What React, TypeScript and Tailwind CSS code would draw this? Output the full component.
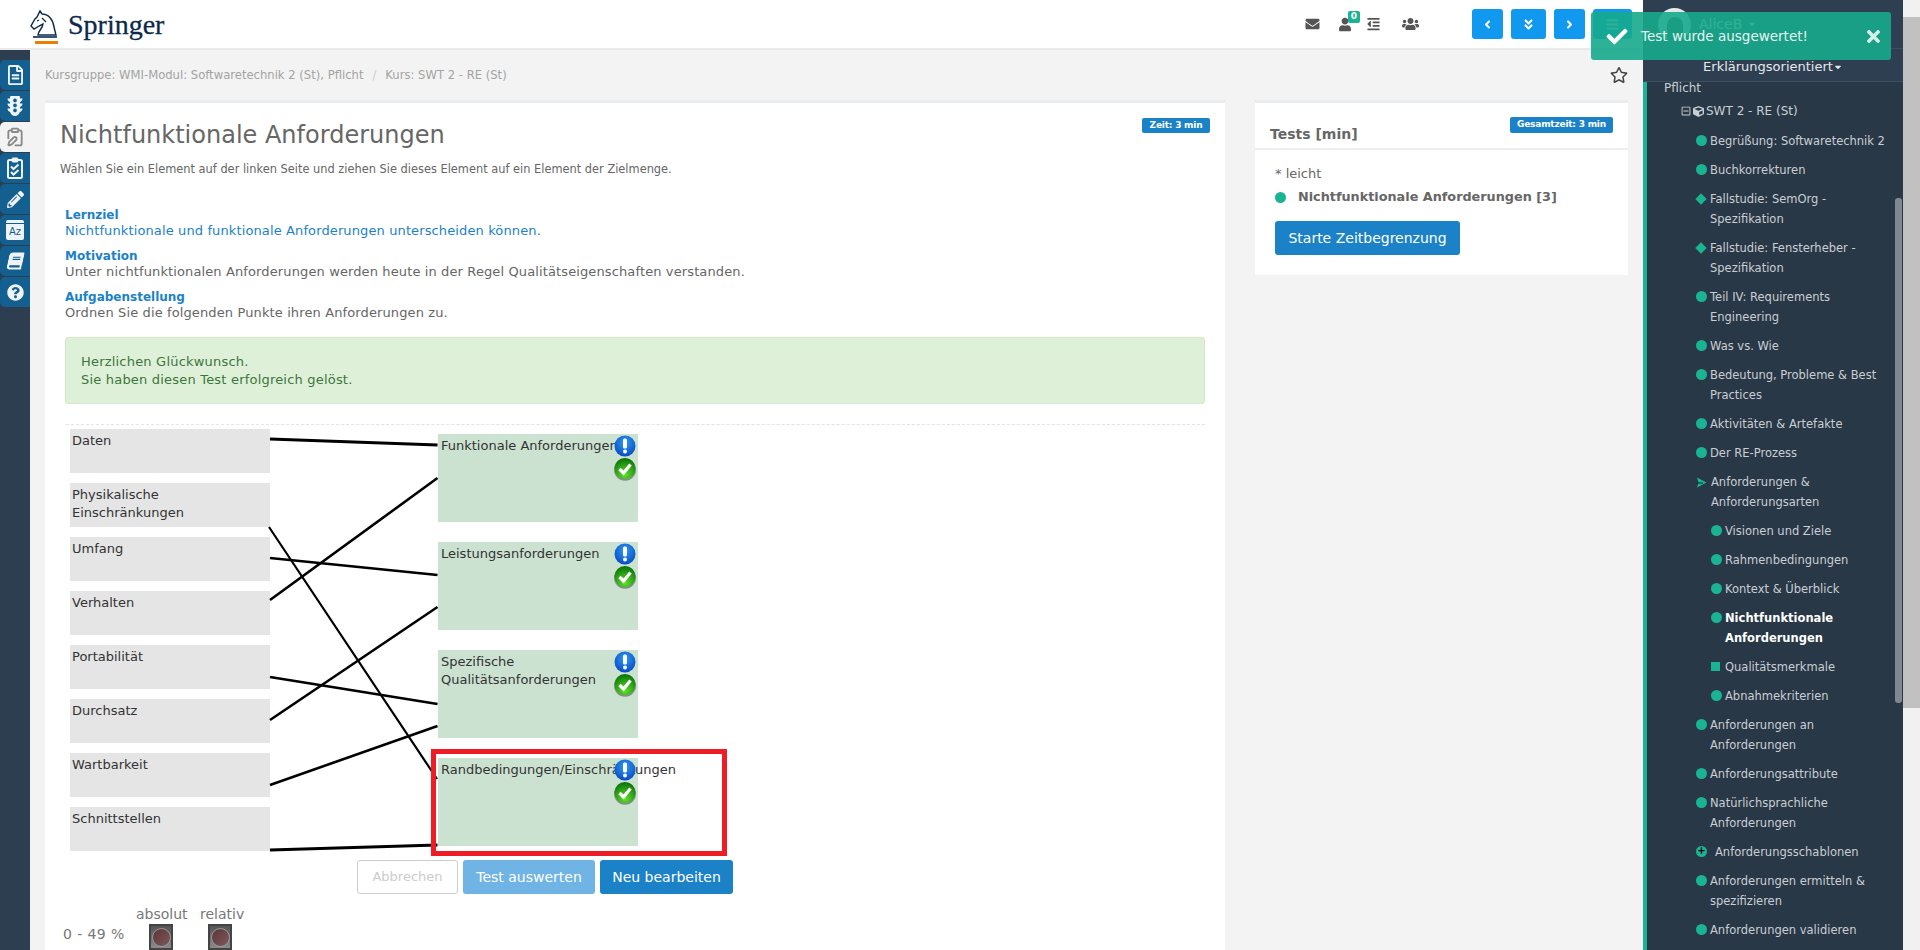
import { useId } from "react";
import {
  FaRegFileAlt,
  FaTrafficLight,
  FaPencilAlt,
  FaBook,
  FaQuestionCircle,
  FaEnvelope,
  FaUser,
  FaOutdent,
  FaUsers,
  FaAngleLeft,
  FaAngleRight,
  FaAngleDoubleDown,
  FaBars,
  FaCheck,
  FaTimes,
  FaRegStar,
  FaCube,
  FaRegMinusSquare,
  FaCaretDown,
} from "react-icons/fa";
import { ClipboardPen } from "lucide-react";

type Marker = "circle" | "diamond" | "arrow" | "square" | "plus";

const tree: { label: string; marker?: Marker; sub?: boolean; active?: boolean }[] = [
  { label: "Begrüßung: Softwaretechnik 2" },
  { label: "Buchkorrekturen" },
  { label: "Fallstudie: SemOrg - Spezifikation", marker: "diamond" },
  { label: "Fallstudie: Fensterheber - Spezifikation", marker: "diamond" },
  { label: "Teil IV: Requirements Engineering" },
  { label: "Was vs. Wie" },
  { label: "Bedeutung, Probleme & Best Practices" },
  { label: "Aktivitäten & Artefakte" },
  { label: "Der RE-Prozess" },
  { label: "Anforderungen & Anforderungsarten", marker: "arrow" },
  { label: "Visionen und Ziele", sub: true },
  { label: "Rahmenbedingungen", sub: true },
  { label: "Kontext & Überblick", sub: true },
  { label: "Nichtfunktionale Anforderungen", sub: true, active: true },
  { label: "Qualitätsmerkmale", sub: true, marker: "square" },
  { label: "Abnahmekriterien", sub: true },
  { label: "Anforderungen an Anforderungen" },
  { label: "Anforderungsattribute" },
  { label: "Natürlichsprachliche Anforderungen" },
  { label: "Anforderungsschablonen", marker: "plus" },
  { label: "Anforderungen ermitteln & spezifizieren" },
  { label: "Anforderungen validieren" },
];

const sources = [
  "Daten",
  "Physikalische Einschränkungen",
  "Umfang",
  "Verhalten",
  "Portabilität",
  "Durchsatz",
  "Wartbarkeit",
  "Schnittstellen",
];

const targets = [
  "Funktionale Anforderungen",
  "Leistungsanforderungen",
  "Spezifische Qualitätsanforderungen",
  "Randbedingungen/Einschränkungen",
];

// coordinates are relative to the drag area, which starts at 70,429
const wires = [
  [200, 10, 367.5, 16, 3],
  [199, 98, 367, 350, 2.2],
  [200, 129, 367.5, 146, 2.6],
  [200, 171, 367.5, 49, 2.6],
  [200, 248, 367.5, 275, 2.6],
  [200, 291, 367.5, 178, 2.6],
  [200, 356, 367.5, 297, 2.6],
  [200, 421, 367.5, 416, 3],
];

const TreeMarker = ({ kind = "circle" }: { kind?: Marker }) => {
  if (kind === "diamond") {
    return <span className="mt-[6px] ml-[1px] mr-[2px] h-[8px] w-[8px] rotate-45 bg-[#1ab394]" />;
  }
  if (kind === "square") {
    return <span className="mt-[5px] mr-[2px] h-[9px] w-[9px] bg-[#1ab394]" />;
  }
  if (kind === "arrow") {
    return (
      <svg width="11" height="11" viewBox="0 0 11 11" className="mt-[5px] mr-[1px]">
        <path d="M1 .5 10.5 5.5 1 10.5 2.5 5.5Z" fill="#1ab394" />
        <path d="M1 6h6" stroke="#0b2530" strokeWidth="1" />
      </svg>
    );
  }
  if (kind === "plus") {
    return (
      <span className="mt-[4px] mr-[5px] flex h-[11px] w-[11px] items-center justify-center rounded-full bg-[#1ab394] text-[10px] leading-none font-bold text-black">
        +
      </span>
    );
  }
  return <span className="mt-[4px] h-[11px] w-[11px] rounded-full bg-[#1ab394]" />;
};

const InfoBadge = () => {
  const id = useId();
  return (
    <svg width="22" height="22" viewBox="0 0 22 22" className="absolute top-[1px] left-0">
      <defs>
        <radialGradient id={id} cx="50%" cy="35%" r="70%">
          <stop offset="0%" stopColor="#2f9bf5" />
          <stop offset="100%" stopColor="#0645c0" />
        </radialGradient>
      </defs>
      <circle cx="11" cy="11" r="10.5" fill={`url(#${id})`} />
      <rect x="9" y="3.5" width="4" height="10" rx="1.5" fill="#fff" />
      <circle cx="11" cy="16.6" r="2" fill="#fff" />
    </svg>
  );
};

const CheckBadge = () => {
  const id = useId();
  return (
    <svg width="24" height="24" viewBox="0 0 24 24" className="absolute top-[23px] left-[-1px]">
      <defs>
        <radialGradient id={id} cx="50%" cy="80%" r="80%">
          <stop offset="0%" stopColor="#5fe02a" />
          <stop offset="100%" stopColor="#067006" />
        </radialGradient>
      </defs>
      <circle cx="12" cy="12.8" r="11" fill="#4d5a4d" opacity="0.6" />
      <circle cx="12" cy="11.5" r="10.5" fill={`url(#${id})`} />
      <path d="M6.5 12 10.5 16 17.5 7.5" fill="none" stroke="#fff" strokeWidth="3.2" />
    </svg>
  );
};

const TrafficLight = () => (
  <div className="flex h-[26px] w-[24px] items-center justify-center border-2 border-[#444] bg-gradient-to-b from-[#555] to-[#8a8a8a]">
    <span className="h-[19px] w-[19px] rounded-full border border-[#999] bg-gradient-to-br from-[#5c3438] to-[#7d5a5c]" />
  </div>
);

const SideTab = ({ children, active }: { children: React.ReactNode; active?: boolean }) => (
  <div
    className={`flex h-[30px] w-[30px] items-center justify-center rounded-l-[5px] ${
      active ? "bg-[#f3f3f3] text-[#8a8a8a]" : "bg-[#135f90] text-[#eef3f7]"
    }`}
  >
    {children}
  </div>
);

export default function App() {
  return (
    <div className="relative flex h-[950px] overflow-hidden bg-[#f3f3f3] font-['DejaVu_Sans',sans-serif] text-[13px] text-[#666]">
      {/* Main column */}
      <div className="flex min-w-0 flex-1 flex-col">
        <header className="flex h-[50px] shrink-0 items-center border-b-2 border-[#e9e9e9] bg-white">
          <div className="relative ml-[30px] h-[42px] w-[28px]">
            <svg width="28" height="30" viewBox="0 0 28 30" className="absolute top-[6px] left-0">
              <path
                d="M10 2 12 5C18 5 23 10 24 18L26 26H8C8 22 13 19 13 15L9 17 4 20 1 17 5 10 7 8Z"
                fill="none"
                stroke="#0b2a4a"
                strokeWidth="1.4"
              />
              <path d="M3 28H27" stroke="#0b2a4a" strokeWidth="1.6" />
              <path d="M12 9 16 13M7 12 9 11" stroke="#0b2a4a" strokeWidth="1.2" />
            </svg>
            <span className="absolute top-[38px] left-[5px] h-[3px] w-[23px] bg-[#ef7d00]" />
          </div>
          <span className="ml-[10px] pt-[2px] font-['Liberation_Serif',serif] text-[28px] leading-none font-medium text-[#0b2a4a] [-webkit-text-stroke:0.3px_#0b2a4a]">
            Springer
          </span>
          <div className="ml-auto flex items-center text-[#555]">
            <FaEnvelope className="h-[14px] w-[15px]" />
            <div className="relative ml-[19px] w-[14px]">
              <FaUser className="h-[15px] w-[12px]" />
              <span className="absolute top-[-6px] left-[9px] flex h-[12px] w-[12px] items-center justify-center rounded-[2px] bg-[#1ab394] text-[9px] leading-none font-bold text-white">
                0
              </span>
            </div>
            <FaOutdent className="ml-[13px] h-[14px] w-[15px]" />
            <FaUsers className="ml-[21px] h-[16px] w-[17px]" />
            <div className="mr-[11px] ml-[53px] flex items-center gap-[8px] text-white">
              <button className="flex h-[30px] w-[31px] items-center justify-center rounded-[3px] bg-[#1099ef]">
                <FaAngleLeft className="h-[13px] w-[13px]" />
              </button>
              <button className="flex h-[30px] w-[35px] items-center justify-center rounded-[3px] bg-[#1099ef]">
                <FaAngleDoubleDown className="h-[13px] w-[13px]" />
              </button>
              <button className="flex h-[30px] w-[31px] items-center justify-center rounded-[3px] bg-[#1099ef]">
                <FaAngleRight className="h-[13px] w-[13px]" />
              </button>
              <button className="flex h-[30px] w-[39px] items-center justify-center rounded-[3px] bg-[#1099ef]">
                <FaBars className="h-[13px] w-[13px]" />
              </button>
            </div>
          </div>
        </header>

        <div className="flex min-h-0 flex-1">
          {/* Left tabs */}
          <nav className="flex w-[30px] shrink-0 flex-col gap-[1px] bg-[#2c3e50] pt-[10px]">
            <SideTab>
              <FaRegFileAlt className="h-[20px] w-[17px]" />
            </SideTab>
            <SideTab>
              <FaTrafficLight className="h-[20px] w-[16px]" />
            </SideTab>
            <SideTab active>
              <ClipboardPen className="h-[22px] w-[20px]" strokeWidth={2.2} />
            </SideTab>
            <SideTab>
              <svg width="16" height="22" viewBox="0 0 16 22" fill="none" stroke="currentColor">
                <rect x="1" y="3" width="14" height="18" rx="1.5" strokeWidth="2" />
                <rect x="5" y="1" width="6" height="4" rx="1" fill="currentColor" strokeWidth="1" />
                <path d="M4 9.5 6.5 12 11.5 7.5M4 15 6.5 17.5 11.5 13" strokeWidth="2" />
              </svg>
            </SideTab>
            <SideTab>
              <FaPencilAlt className="h-[17px] w-[17px]" />
            </SideTab>
            <SideTab>
              <span className="flex h-[20px] w-[18px] flex-col rounded-[2px] bg-[#eef3f7]">
                <span className="mt-[3px] h-[1px] bg-[#135f90]" />
                <span className="mt-[1px] text-center text-[10px] leading-[13px] text-[#135f90]">Az</span>
              </span>
            </SideTab>
            <SideTab>
              <FaBook className="h-[18px] w-[15px] -skew-x-12" />
            </SideTab>
            <SideTab>
              <FaQuestionCircle className="h-[17px] w-[17px]" />
            </SideTab>
          </nav>

          {/* Content */}
          <main className="min-w-0 flex-1 pl-[15px]">
            <div className="flex h-[50px] items-center justify-between pr-[15px]">
              <div className="pt-[2px] text-[11.6px] text-[#a3a3a3]">
                Kursgruppe: WMI-Modul: Softwaretechnik 2 (St), Pflicht
                <span className="mx-[9px] text-[#ccc]">/</span>
                Kurs: SWT 2 - RE (St)
              </div>
              <FaRegStar className="h-[18px] w-[18px] text-[#444]" />
            </div>

            <div className="flex items-start">
              {/* Exercise card */}
              <section className="relative h-[900px] w-[1180px] border-t-[3px] border-[#e9edf0] bg-white pl-[15px]">
                <span className="absolute top-[15px] right-[15px] flex h-[15px] w-[68px] items-center justify-center rounded-[2px] bg-[#1b82c8] text-[9px] font-bold tracking-[-0.2px] text-white">
                  Zeit: 3 min
                </span>
                <h1 className="pt-[17px] text-[24px] leading-[30px] font-normal text-[#666]">
                  Nichtfunktionale Anforderungen
                </h1>
                <p className="mt-[12px] text-[11.4px] leading-[14px]">
                  Wählen Sie ein Element auf der linken Seite und ziehen Sie dieses Element auf ein Element der Zielmenge.
                </p>

                <div className="mt-[31px] pl-[5px] leading-[16px] tracking-[0.12px]">
                  <div className="text-[12px] font-bold tracking-normal text-[#1b82c8]">Lernziel</div>
                  <div className="text-[#1b82c8]">Nichtfunktionale und funktionale Anforderungen unterscheiden können.</div>
                  <div className="mt-[9px] text-[12px] font-bold tracking-normal text-[#1b82c8]">Motivation</div>
                  <div>Unter nichtfunktionalen Anforderungen werden heute in der Regel Qualitätseigenschaften verstanden.</div>
                  <div className="mt-[9px] text-[12px] font-bold tracking-normal text-[#1b82c8]">Aufgabenstellung</div>
                  <div>Ordnen Sie die folgenden Punkte ihren Anforderungen zu.</div>
                </div>

                <div className="mt-[16px] ml-[5px] flex h-[67px] w-[1140px] flex-col justify-center rounded-[3px] border border-[#d6e9c6] bg-[#dff0d8] pl-[15px] leading-[18px] tracking-[0.2px] text-[#3c763d]">
                  <div>Herzlichen Glückwunsch.</div>
                  <div>Sie haben diesen Test erfolgreich gelöst.</div>
                </div>

                <div className="mt-[20px] ml-[6px] w-[1139px] border-t border-dashed border-[#e3e3e3]" />

                {/* Drag area */}
                <div className="relative mt-[4px] ml-[10px] flex h-[422px] gap-[168px] text-[#333]">
                  <div className="flex w-[200px] flex-col gap-[10px]">
                    {sources.map((s) => (
                      <div key={s} className="h-[44px] bg-[#e5e5e5] pt-[3px] pl-[2px] leading-[18px]">
                        <div className="w-[160px]">{s}</div>
                      </div>
                    ))}
                  </div>
                  <div className="flex w-[200px] flex-col gap-[20px] pt-[5px]">
                    {targets.map((t) => (
                      <div key={t} className="relative h-[88px] bg-[#cce2d1] pt-[3px] pl-[3px] leading-[18px]">
                        <div className={t === "Spezifische Qualitätsanforderungen" ? "w-[150px]" : "whitespace-nowrap"}>{t}</div>
                        <span className="absolute top-0 left-[176px] block h-[48px] w-[24px]">
                          <InfoBadge />
                          <CheckBadge />
                        </span>
                      </div>
                    ))}
                  </div>
                  <svg width="380" height="430" className="pointer-events-none absolute top-0 left-0">
                    {wires.map(([x1, y1, x2, y2, w]) => (
                      <line key={y1} x1={x1} y1={y1} x2={x2} y2={y2} stroke="#000" strokeWidth={w} />
                    ))}
                  </svg>
                  {/* red marker around the last target */}
                  <div className="pointer-events-none absolute top-[320px] left-[361px] h-[107px] w-[296px] border-[5px] border-[#ee1c25]" />
                </div>

                <div className="mt-[9px] ml-[297px] flex h-[34px] gap-[5px] text-[14px]">
                  <button className="w-[101px] rounded-[3px] border border-[#ccc] bg-white text-[13px] text-[#ccc]">Abbrechen</button>
                  <button className="w-[132px] rounded-[3px] bg-[#6fb4e4] text-white">Test auswerten</button>
                  <button className="w-[133px] rounded-[3px] bg-[#1b82c8] text-white">Neu bearbeiten</button>
                </div>

                <div className="mt-[12px] ml-[3px] flex text-[14px] leading-[16px] text-[#777]">
                  <div className="w-[73px] pt-[20px] tracking-[0.4px]">0 - 49 %</div>
                  <div className="flex w-[59px] flex-col items-start">
                    <div>absolut</div>
                    <div className="mt-[2px] ml-[13px]">
                      <TrafficLight />
                    </div>
                  </div>
                  <div className="flex flex-col items-start">
                    <div className="ml-[5px]">relativ</div>
                    <div className="mt-[2px] ml-[13px]">
                      <TrafficLight />
                    </div>
                  </div>
                </div>
              </section>

              {/* Tests card */}
              <aside className="relative ml-[30px] h-[175px] w-[373px] border-t-[3px] border-[#e9edf0] bg-white">
                <span className="absolute top-[14px] right-[15px] flex h-[16px] w-[103px] items-center justify-center rounded-[2px] bg-[#1b82c8] text-[9px] font-bold tracking-[-0.2px] text-white">
                  Gesamtzeit: 3 min
                </span>
                <div className="flex h-[47px] items-end border-b-2 border-[#eee] pb-[3px] pl-[15px] text-[14px] font-bold">
                  Tests [min]
                </div>
                <div className="pt-[15px] pl-[20px]">
                  <div className="leading-[18px]">* leicht</div>
                  <div className="mt-[5px] flex h-[18px] items-center text-[12.8px] font-bold">
                    <span className="h-[11px] w-[11px] rounded-full bg-[#1ab394]" />
                    <span className="ml-[12px]">Nichtfunktionale Anforderungen [3]</span>
                  </div>
                  <button className="mt-[15px] h-[34px] w-[185px] rounded-[3px] bg-[#1b82c8] text-[14px] text-white">
                    Starte Zeitbegrenzung
                  </button>
                </div>
              </aside>
            </div>
          </main>
        </div>
      </div>

      {/* Right sidebar */}
      <aside className="relative flex w-[260px] shrink-0 flex-col bg-[#293847] text-[11.5px] text-[#c9ced3]">
        <div className="h-[82px] shrink-0 border-b border-[#3d4e60] bg-[#2f3f52]">
          <div className="flex h-[49px] items-center border-b border-[#3d4e60] pl-[15px]">
            <span className="flex h-[33px] w-[33px] items-end justify-center overflow-hidden rounded-full bg-[#e8e8e8]">
              <span className="h-[24px] w-[16px] rounded-t-full bg-[#3b3b3b]" />
            </span>
            <span className="ml-[8px] text-[14px] text-white">AliceB</span>
            <FaCaretDown className="ml-[5px] h-[10px] w-[10px] text-white" />
          </div>
          <div className="flex h-[32px] items-center justify-center pt-[3px] text-[13px] text-[#e6e9ec]">
            Erklärungsorientiert
            <FaCaretDown className="h-[10px] w-[10px]" />
          </div>
        </div>
        <div className="min-h-0 flex-1 border-l-4 border-[#1ab394]">
          <div className="pl-[17px] text-[12px] leading-[12px]">Pflicht</div>
          <div className="mt-[7px] flex h-[20px] items-center pl-[34px] text-[12px]">
            <FaRegMinusSquare className="h-[10px] w-[10px]" />
            <FaCube className="mx-[2px] h-[11px] w-[11px]" />
            SWT 2 - RE (St)
          </div>
          <ul className="mt-[5px]">
            {tree.map((item) => (
              <li
                key={item.label}
                className={`flex items-start py-[4.5px] leading-[20px] ${item.sub ? "pl-[64px]" : "pl-[49px]"}`}
              >
                <TreeMarker kind={item.marker} />
                <span
                  className={`ml-[3px] ${item.sub ? "w-[150px]" : "w-[178px]"} ${
                    item.active ? "font-bold text-white" : ""
                  }`}
                >
                  {item.label}
                </span>
              </li>
            ))}
          </ul>
        </div>
        {/* inner scrollbar thumb */}
        <span className="absolute top-[198px] right-[1px] h-[505px] w-[7px] rounded-[3px] bg-[#7f8992]" />
      </aside>

      {/* Page scrollbar */}
      <div className="relative w-[17px] shrink-0 bg-[#f1f1f1]">
        <span className="absolute top-[17px] left-0 h-[691px] w-full bg-[#c1c1c1]" />
      </div>

      {/* Toast */}
      <div className="absolute top-[12px] left-[1591px] flex h-[48px] w-[300px] items-center rounded-[3px] bg-[#17aa8c]/90 text-[13.5px] text-[#e4f5f0]">
        <FaCheck className="ml-[14px] h-[21px] w-[24px] text-white" />
        <span className="ml-[12px]">Test wurde ausgewertet!</span>
        <FaTimes className="absolute right-[10px] h-[19px] w-[15px] text-[#d7efe9]" />
      </div>
    </div>
  );
}
